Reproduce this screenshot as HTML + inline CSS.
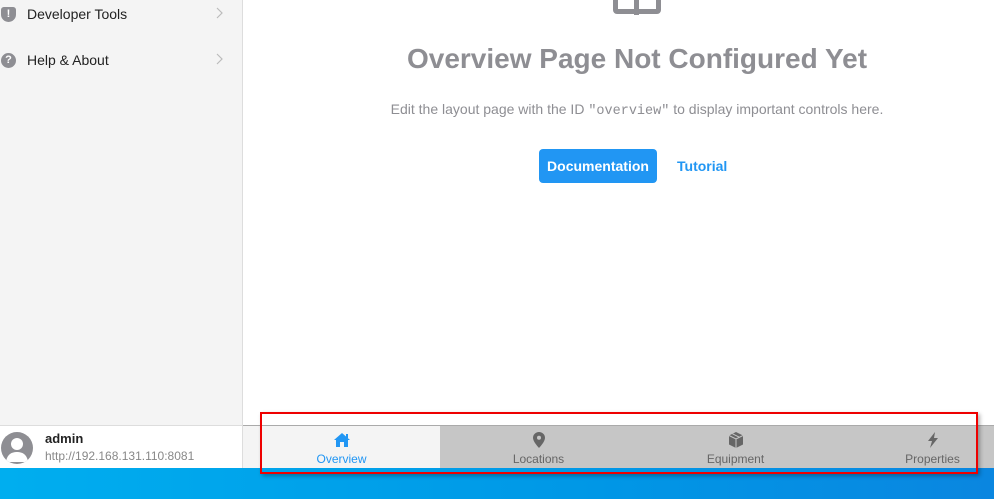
<!DOCTYPE html>
<html><head><meta charset="utf-8"><style>
*{margin:0;padding:0;box-sizing:border-box}
body{width:994px;height:499px;overflow:hidden;position:relative;background:#fff;font-family:"Segoe UI","Liberation Sans",sans-serif}
.side{position:absolute;left:0;top:0;width:243px;height:425px;background:#f4f4f4;border-right:1px solid #ddd}
.item{position:absolute;left:0;width:242px;height:20px;font-size:14px;color:#222}
.item .ic{position:absolute;left:1px;top:2px;width:15px;height:15px;border-radius:50%;background:#8e8e93;color:#fff;font-size:11px;font-weight:bold;text-align:center;line-height:15px}
.item .t{position:absolute;left:27px;top:1px}
.item .ch{position:absolute;left:216px;top:2px}
.foot{position:absolute;left:0;top:425px;width:243px;height:43px;background:#fff;border-top:1px solid #ddd;border-right:1px solid #ddd}
.av{position:absolute;left:1px;top:6px;width:32px;height:32px;border-radius:50%;background:#8e8e93;overflow:hidden}
.main{position:absolute;left:243px;top:0;width:751px;height:425px;text-align:center}
h1{position:absolute;left:0;width:788px;top:43px;font-size:28px;color:#8e8e93;font-weight:bold}
.desc{position:absolute;left:0;width:788px;top:101px;font-size:14px;color:#8e8e93}
.desc code{font-family:"Liberation Mono",monospace;font-size:13.5px}
.btn{position:absolute;left:296px;top:149px;width:118px;height:34px;background:#2196f3;border-radius:4px;color:#fff;font-weight:bold;font-size:14px;line-height:34px;text-align:center}
.tut{position:absolute;left:434px;top:158px;color:#2196f3;font-weight:bold;font-size:14px}
.tabs{position:absolute;left:243px;top:425px;width:751px;height:43px;background:#c6c6c6;border-top:1px solid #aaa}
.tab{position:absolute;top:0;height:43px;text-align:center;font-size:12px;color:#666}
.tab svg{display:block;margin:6px auto 0}
.tab span{display:block;margin-top:4px}
.blue{position:absolute;left:0;top:468px;width:994px;height:31px;background:linear-gradient(90deg,#00aeef,#0097e6 60%,#0a86e0)}
.red{position:absolute;left:260px;top:412px;width:718px;height:62px;border:2px solid #e00;box-shadow:2px 2px 4px rgba(0,0,0,.3)}
</style></head><body>
<div class="side">
 <div class="item" style="top:5px"><div class="ic" style="border-radius:3px 3px 8px 8px">!</div><div class="t">Developer Tools</div><svg class="ch" width="8" height="12" viewBox="0 0 8 12"><path d="M1 1l5 5-5 5" stroke="#bbb" stroke-width="1.2" fill="none"/></svg></div>
 <div class="item" style="top:51px"><div class="ic">?</div><div class="t">Help &amp; About</div><svg class="ch" width="8" height="12" viewBox="0 0 8 12"><path d="M1 1l5 5-5 5" stroke="#bbb" stroke-width="1.2" fill="none"/></svg></div>
</div>
<div class="foot">
 <div class="av"><svg width="32" height="32"><circle cx="16" cy="12" r="6" fill="#fff"/><path d="M5 30c1-8 6-10 11-10s10 2 11 10z" fill="#fff"/></svg></div>
 <div style="position:absolute;left:45px;top:5px;font-size:13px;font-weight:bold;color:#222">admin</div>
 <div style="position:absolute;left:45px;top:23px;font-size:12px;color:#888">http://192.168.131.110:8081</div>
</div>
<div class="main">
 <div style="position:absolute;left:370px;top:-10px;width:48px;height:24px;border:5px solid #8e8e93;border-radius:4px"><div style="position:absolute;left:16px;top:0;width:5px;height:20px;background:#8e8e93"></div></div>
 <h1>Overview Page Not Configured Yet</h1>
 <div class="desc">Edit the layout page with the ID <code>"overview"</code> to display important controls here.</div>
 <div class="btn">Documentation</div>
 <div class="tut">Tutorial</div>
</div>
<div class="tabs">
 <div class="tab" style="left:0;width:197px;background:#f4f4f4;color:#2196f3"><svg width="18" height="16" viewBox="0 0 18 16"><path d="M9 1L1 8h2v7h4v-5h4v5h4V8h2z" fill="#2196f3"/><rect x="13" y="2" width="2" height="4" fill="#2196f3"/></svg><span>Overview</span></div>
 <div class="tab" style="left:197px;width:197px"><svg width="12" height="16" viewBox="0 0 12 16"><path d="M6 0C2.7 0 0 2.6 0 5.8 0 10 6 16 6 16s6-6 6-10.2C12 2.6 9.3 0 6 0z" fill="#666"/><circle cx="6" cy="5.8" r="2" fill="#c6c6c6"/></svg><span>Locations</span></div>
 <div class="tab" style="left:394px;width:197px"><svg width="16" height="16" viewBox="0 0 16 16"><path d="M8 0L1 3.5v9L8 16l7-3.5v-9z" fill="#666"/><path d="M1 3.5L8 7l7-3.5M8 7v9M4.5 1.8l7 3.5" stroke="#c6c6c6" stroke-width="1" fill="none"/></svg><span>Equipment</span></div>
 <div class="tab" style="left:591px;width:197px"><svg width="12" height="16" viewBox="0 0 12 16"><path d="M8 0L1 9h4l-2 7 8-10H7z" fill="#666"/></svg><span>Properties</span></div>
</div>
<div class="blue"></div>
<div class="red"></div>
</body></html>
